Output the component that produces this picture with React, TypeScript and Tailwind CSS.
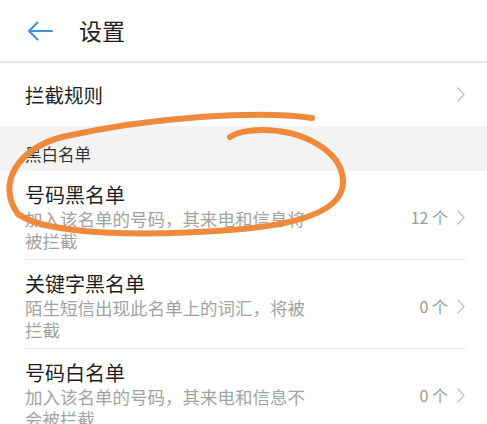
const font = { fontFamily: '"Noto Sans CJK SC", "Noto Sans", sans-serif' };

interface ListItem {
  title: string;
  desc: string;
  count: string;
}

const items: ListItem[] = [
  { title: "号码黑名单", desc: "加入该名单的号码，其来电和信息将被拦截", count: "12 个" },
  { title: "关键字黑名单", desc: "陌生短信出现此名单上的词汇，将被拦截", count: "0 个" },
  { title: "号码白名单", desc: "加入该名单的号码，其来电和信息不会被拦截", count: "0 个" },
];

function Chevron() {
  return (
    <svg width="10" height="17" viewBox="0 0 10 17" className="shrink-0">
      <path d="M1.5 1.5 L8 8.5 L1.5 15.5" fill="none" stroke="#c4c4c4" strokeWidth="1.4" />
    </svg>
  );
}

export default function App() {
  return (
    <div className="relative h-[424px] w-[487px] overflow-hidden bg-white text-[#1f1f1f]" style={font}>
      {/* header */}
      <div className="flex h-[63px] items-center border-b-2 border-[#e6e6e6] pl-[27px]">
        <svg width="26" height="20" viewBox="0 0 26 20">
          <path d="M25 10 H2 M10.5 1.5 L2 10 L10.5 18.5" fill="none" stroke="#3f8fdf" strokeWidth="2" strokeLinecap="round" strokeLinejoin="round" />
        </svg>
        <span className="ml-[26px] text-[23px] leading-none text-[#222]">设置</span>
      </div>

      {/* intercept rule */}
      <div className="flex h-[63px] items-center justify-between pl-[25px] pr-[21px]">
        <span className="text-[19.5px]">拦截规则</span>
        <Chevron />
      </div>

      {/* section label */}
      <div className="flex h-[45px] items-end bg-[#f3f3f3] pb-[9px] pl-[25px]">
        <span className="text-[16.5px] leading-none text-[#333]">黑白名单</span>
      </div>

      {/* list */}
      <div className="flex flex-col">
        {items.map((item, i) => (
          <div key={item.title} className="pl-[25px] pr-[21px]">
            <div className={"flex items-center justify-between pt-[11px] pb-[7px] " + (i < items.length - 1 ? "border-b border-[#e8e8e8]" : "")}>
              <div className="flex flex-col">
                <span className="text-[20px] leading-[26px]">{item.title}</span>
                <span className="max-w-[286px] text-[17.5px] leading-[22px] text-[#a2a2a2]">{item.desc}</span>
              </div>
              <div className="flex items-center gap-[8px]">
                <span className="text-[16px] text-[#9a9a9a]">{item.count}</span>
                <Chevron />
              </div>
            </div>
          </div>
        ))}
      </div>

      {/* hand-drawn annotation */}
      <svg className="pointer-events-none absolute left-0 top-0" width="487" height="424" viewBox="0 0 487 424">
        <path
          d="M312 118 C260 110 150 117 62 137 C18 148 -4 184 18 214 C48 236 150 236 230 230 C300 225 345 210 343 180 C341 150 302 130 262 130 C248 130 236 133 230 137"
          fill="none"
          stroke="#ef8a3c"
          strokeWidth="6"
          strokeLinecap="round"
          strokeLinejoin="round"
        />
      </svg>
    </div>
  );
}
